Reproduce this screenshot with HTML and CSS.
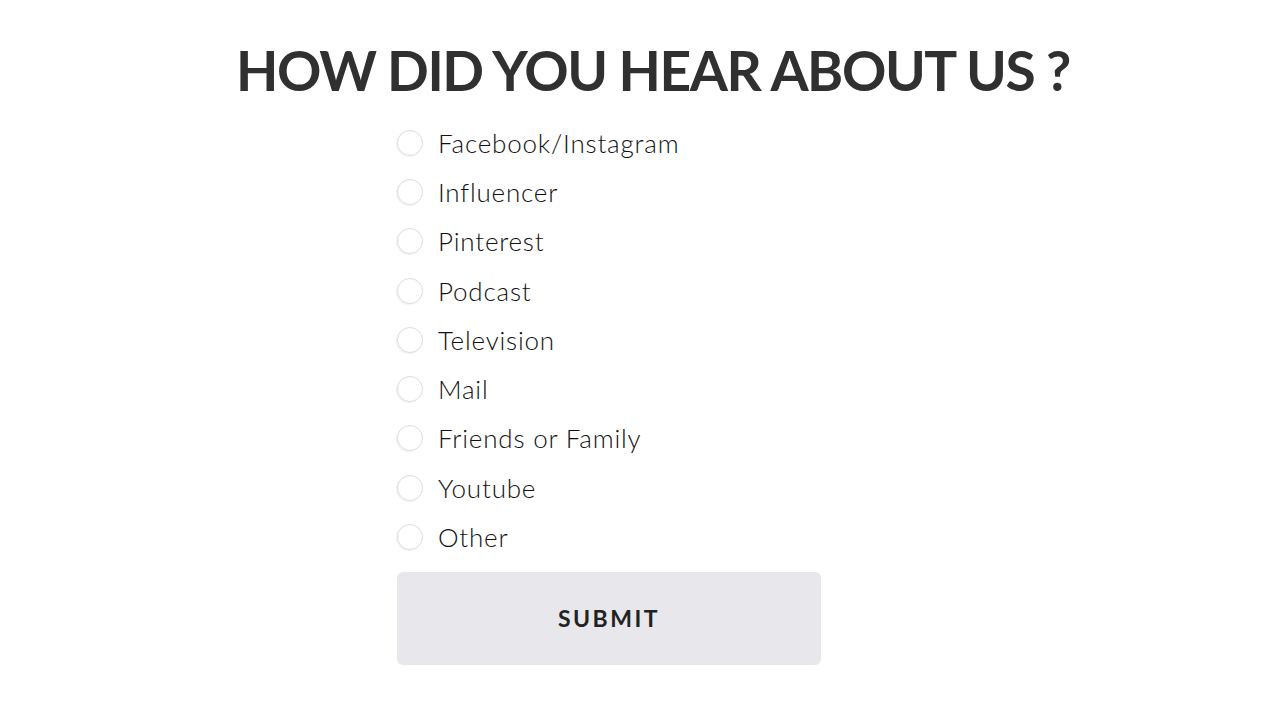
FILE: index.html
```html
<!DOCTYPE html>
<html>
<head>
<meta charset="utf-8">
<link rel="stylesheet" href="styles.css">
</head>
<body>
<main class="page">
  <h1 class="title">HOW DID YOU HEAR ABOUT US ?</h1>
  <form class="survey">
    <ul class="options">
      <li class="option"><span class="radio"></span><span class="label">Facebook/Instagram</span></li>
      <li class="option"><span class="radio"></span><span class="label">Influencer</span></li>
      <li class="option"><span class="radio"></span><span class="label">Pinterest</span></li>
      <li class="option"><span class="radio"></span><span class="label">Podcast</span></li>
      <li class="option"><span class="radio"></span><span class="label">Television</span></li>
      <li class="option"><span class="radio"></span><span class="label">Mail</span></li>
      <li class="option"><span class="radio"></span><span class="label">Friends or Family</span></li>
      <li class="option"><span class="radio"></span><span class="label">Youtube</span></li>
      <li class="option"><span class="radio"></span><span class="label">Other</span></li>
    </ul>
    <button type="button" class="submit">SUBMIT</button>
  </form>
</main>
</body>
</html>
```

FILE: styles.css
```css
* { box-sizing: border-box; }
html, body { margin: 0; padding: 0; background: #fff; }
body { font-family: Lato, "Open Sans", sans-serif; color: #2a2a2a; }
.page {
  width: 1280px;
  height: 708px;
  display: flex;
  flex-direction: column;
  align-items: center;
}
.title {
  margin: 38px 0 0 0;
  font-size: 55px;
  font-weight: 700;
  line-height: 64px;
  color: #303030;
  letter-spacing: -1.45px;
  padding-left: 26px;
}
.survey {
  width: 424px;
  margin-left: -62px;
  margin-top: 16px;
  display: flex;
  flex-direction: column;
}
.options { list-style: none; margin: 0; padding: 0; }
.option {
  display: flex;
  align-items: center;
  height: 49.3px;
}
.radio {
  width: 26px;
  height: 26px;
  border-radius: 50%;
  border: 1px solid #dcdcdf;
  box-shadow: -1px 1px 1px rgba(0,0,0,0.06);
  flex: none;
  margin-right: 15px;
}
.label {
  font-size: 26px;
  font-weight: 300;
  letter-spacing: 0.8px;
  color: #111;
}
.submit {
  margin-top: 10px;
  height: 93px;
  width: 424px;
  border: none;
  border-radius: 6px;
  background: #e8e8ec;
  font-family: Lato, sans-serif;
  font-size: 23px;
  font-weight: 700;
  letter-spacing: 2.5px;
  color: #222;
}
```
